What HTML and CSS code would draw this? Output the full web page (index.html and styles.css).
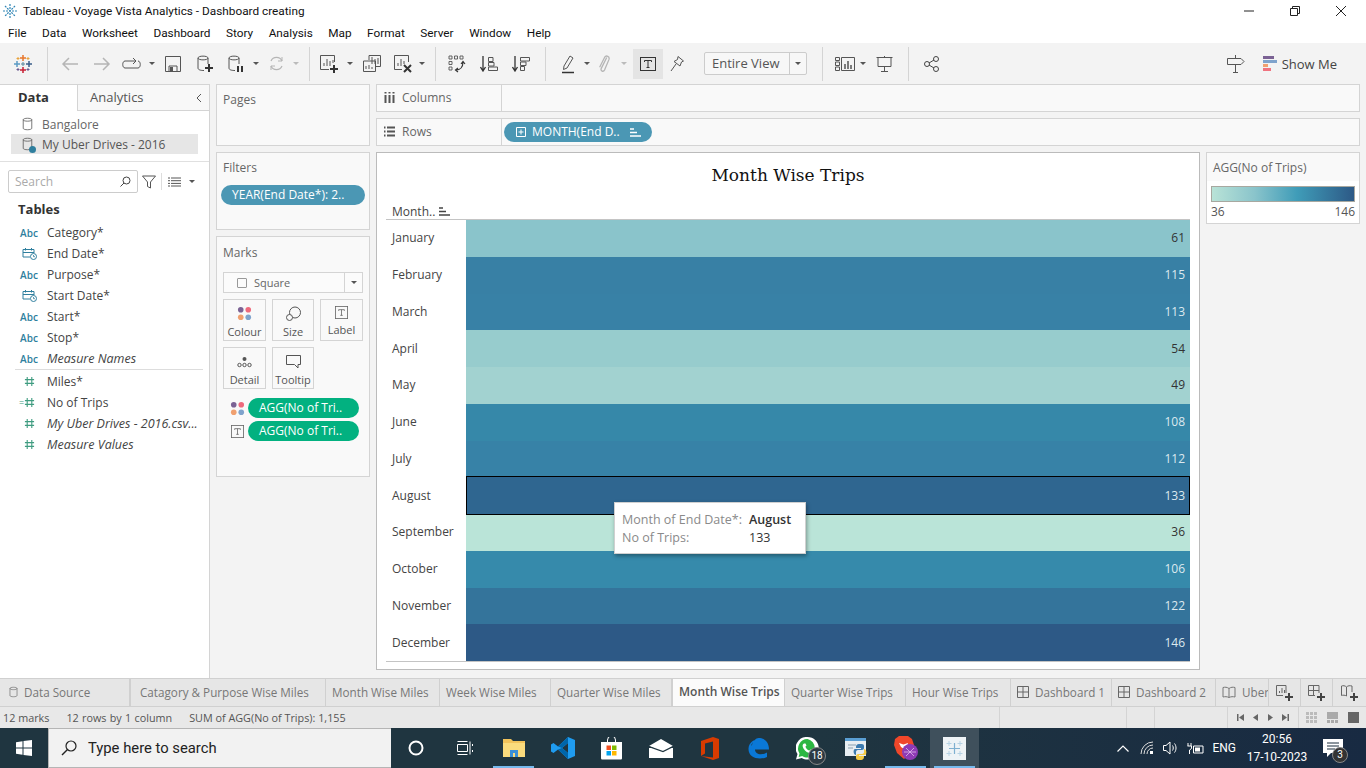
FILE: index.html
```html
<!DOCTYPE html>
<html lang="en">
<head>
  <meta charset="UTF-8" />
  <title>Tableau - Voyage Vista Analytics - Dashboard creating</title>
  <link rel="stylesheet" href="styles.css">
</head>
<body>
  <svg class="defs" width="0" height="0">
    <symbol id="i-db" viewBox="0 0 14 18"><path d="M1.5 3.5C1.5 1 12.5 1 12.5 3.5V14.5C12.5 17 1.5 17 1.5 14.5ZM1.5 3.5C1.5 6 12.5 6 12.5 3.5" fill="none" stroke="currentColor"/></symbol>
    <symbol id="i-t" viewBox="0 0 16 16"><rect x=".5" y=".5" width="15" height="15" fill="none" stroke="currentColor"/><path d="M4.5 6V4.5H11.5V6M8 4.5V11.5M6.5 11.5H9.5" fill="none" stroke="currentColor"/></symbol>
    <symbol id="i-dots" viewBox="0 0 16 16"><circle cx="4" cy="4" r="3" fill="#7b6294"/><circle cx="12" cy="4" r="3" fill="#ee6a7c"/><circle cx="4" cy="12" r="3" fill="#f0a070"/><circle cx="12" cy="12" r="3" fill="#7fa3cc"/></symbol>
    <symbol id="i-sort" viewBox="0 0 11 9"><path d="M0 1H4M0 4.500H7M0 8H11" fill="none" stroke="currentColor" stroke-width="1.500"/></symbol>
    <symbol id="i-hash" viewBox="0 0 12 12"><path d="M3.5 1V11M8.5 1V11M1 4H11M1 8H11" fill="none" stroke="#3f9c80" stroke-width="1.2"/></symbol>
    <symbol id="i-cal" viewBox="0 0 15 13"><path d="M8 10H1V2.5H12V6M1 5.5H12M3.5 1V3.500M9.500 1V3.500" fill="none" stroke="#2f7f9e"/><circle cx="11.500" cy="9.500" r="3" fill="#fff" stroke="#2f7f9e"/><path d="M11.500 8V9.700H13" fill="none" stroke="#2f7f9e" stroke-width=".8"/></symbol>
    <symbol id="i-board" viewBox="0 0 12 12"><path d="M.5.500H11.500V11.500H.5ZM6 .5V11.500M.5 6H11.500" fill="none" stroke="#666"/></symbol>
    <symbol id="i-book" viewBox="0 0 14 12"><path d="M7 2.500C5 1 3 1 1 1.500V11C3 10.500 5 10.500 7 11.500 9 10.500 11 10.500 13 11V1.500C11 1 9 1 7 2.500ZM7 2.500V11.500" fill="none" stroke="#777"/></symbol>
  </svg>

  <div class="app">
    <header class="titlebar">
      <svg class="app-icon" width="14" height="14" viewBox="0 0 14 14"><path d="M7 0V14M0 7H14M2 2L12 12M12 2L2 12" stroke="#2f85b5" stroke-width="1.200" stroke-dasharray="2 1"/></svg>
      <span class="title-text">Tableau - Voyage Vista Analytics - Dashboard creating</span>
      <div class="win-btns">
        <svg width="12" height="12" viewBox="0 0 12 12"><path d="M1 6H11" stroke="#222"/></svg>
        <svg width="12" height="12" viewBox="0 0 12 12"><path d="M1.500 3.500H8.500V10.500H1.500ZM3.500 3.500V1.500H10.500V8.500H8.500" fill="none" stroke="#222"/></svg>
        <svg width="12" height="12" viewBox="0 0 12 12"><path d="M1 1L11 11M11 1L1 11" stroke="#222"/></svg>
      </div>
    </header>

    <nav class="menubar">
      <span>File</span><span>Data</span><span>Worksheet</span><span>Dashboard</span><span>Story</span><span>Analysis</span><span>Map</span><span>Format</span><span>Server</span><span>Window</span><span>Help</span>
    </nav>

    <div class="toolbar">
      <div class="tgroup g0">
        <svg width="18" height="18" viewBox="0 0 18 18"><path d="M9 0V6M6 3H12" stroke="#e8762b" stroke-width="1.500"/><path d="M3 6V12M0 9H6" stroke="#5b9bc4" stroke-width="1.500"/><path d="M15 6V12M12 9H18" stroke="#3b5f8a" stroke-width="1.500"/><path d="M9 12V18M6 15H12" stroke="#c72035" stroke-width="1.500"/><path d="M9 7V11M7 9H11" stroke="#59879b"/><path d="M4 2V5M2.500 3.500H5.500M14 2V5M12.500 3.500H15.500" stroke="#e8a33d"/><path d="M4 13V16M2.500 14.500H5.500M14 13V16M12.500 14.500H15.500" stroke="#6c5a90"/></svg>
      </div>
      <div class="tgroup g1">
        <span class="ti w32 off"><svg width="18" height="14" viewBox="0 0 18 14"><path d="M17 7H2M8 1L2 7L8 13" fill="none" stroke="currentColor" stroke-width="1.500"/></svg></span>
        <span class="ti w32 off"><svg width="18" height="14" viewBox="0 0 18 14"><path d="M1 7H16M10 1L16 7L10 13" fill="none" stroke="currentColor" stroke-width="1.500"/></svg></span>
        <span class="ti w28"><svg width="20" height="12" viewBox="0 0 20 12"><path d="M13 3H3C0 3 0 10 3 10H16C19 10 19 3 16 3" fill="none" stroke="#555"/><path d="M11 0L14 3L11 6" fill="none" stroke="#555"/></svg></span>
        <span class="car w12"></span>
        <span class="ti w30"><svg width="16" height="16" viewBox="0 0 16 16"><path d="M.5.500H15.500V15.500H.5ZM4 15V10H12V15" fill="none" stroke="#555"/><rect x="5" y="11" width="3" height="4" fill="#555"/></svg></span>
        <span class="ti w34"><svg class="stack" width="16" height="18" viewBox="0 0 16 18"><path d="M1 3C1 .5 11 .5 11 3V9M1 3V13C1 15 4 15.500 7 15.500M1 3C1 5.500 11 5.500 11 3" fill="none" stroke="#555"/><path d="M12 9V17M8 13H16" stroke="#333" stroke-width="2"/></svg></span>
        <span class="ti w28"><svg width="16" height="18" viewBox="0 0 16 18"><path d="M1 3C1 .5 11 .5 11 3V9M1 3V13C1 15 4 15.500 7 15.500M1 3C1 5.500 11 5.500 11 3" fill="none" stroke="#555"/><path d="M10 11V17M14 11V17" stroke="#333" stroke-width="2"/></svg></span>
        <span class="car w12"></span>
        <span class="ti w28 off"><svg width="17" height="17" viewBox="0 0 17 17"><path d="M3 6A6 6 0 0 1 14 6M14 11A6 6 0 0 1 3 11" fill="none" stroke="currentColor" stroke-width="1.200"/><path d="M14 2V6H10M3 15V11H7" fill="none" stroke="currentColor"/></svg></span>
        <span class="car w12 off-car"></span>
      </div>
      <div class="tgroup g2">
        <span class="ti w32"><svg width="18" height="18" viewBox="0 0 18 18"><path d="M14.500 7V.5H.5V14.500H9M4 11V8M7 11V4M10 11V6M13 8V5" fill="none" stroke="#555"/><path d="M14 10V18M10 14H18" stroke="#333" stroke-width="2"/></svg></span>
        <span class="car w10"></span>
        <span class="ti w34"><svg width="18" height="17" viewBox="0 0 18 17"><path d="M6 5V.5H17.500V11.500H13M.5 6H12.500V16.500H.5ZM9 2V9M12 4V9M15 3V9M3 14V11M6 14V10M9 14V12" fill="none" stroke="#555"/></svg></span>
        <span class="ti w28"><svg width="18" height="18" viewBox="0 0 18 18"><path d="M14.500 7V.5H.5V14.500H8M4 11V8M7 11V4M10 9V6" fill="none" stroke="#555"/><path d="M10 10L17 17M17 10L10 17" stroke="#333" stroke-width="2"/></svg></span>
        <span class="car w10"></span>
      </div>
      <div class="tgroup g3">
        <span class="ti w32"><svg width="18" height="18" viewBox="0 0 18 18"><path d="M1 1H4V4H1ZM6.500 1H9.500V4H6.500ZM12 1H15V4H12ZM1 6.500H4V9.500H1ZM1 12H4V15H1Z" fill="none" stroke="#555" stroke-width=".9"/><path d="M15 7C15 12 12 15 8 15M13 9L15 6.500L17 9M10 13L7.500 15L10 17" fill="none" stroke="#333" stroke-width="1.200"/></svg></span>
        <span class="ti w32"><svg width="18" height="16" viewBox="0 0 18 16"><path d="M3 0V14M.5 11L3 15L5.500 11" fill="none" stroke="#333" stroke-width="1.300"/><path d="M8.500 1.500H13V5.500H8.500ZM8.500 6.500H14V10H8.500ZM8.500 11H17.500V14.500H8.500Z" fill="none" stroke="#555"/></svg></span>
        <span class="ti w32"><svg width="18" height="16" viewBox="0 0 18 16"><path d="M3 0V14M.5 11L3 15L5.500 11" fill="none" stroke="#333" stroke-width="1.300"/><path d="M8.500 1.500H17.500V5H8.500ZM8.500 6H14V9.500H8.500ZM8.500 10.500H12.500V14.500H8.500Z" fill="none" stroke="#555"/></svg></span>
      </div>
      <div class="tgroup g4">
        <span class="ti w28"><svg width="14" height="20" viewBox="0 0 14 20"><path d="M3 12L9 2L12 4L6 14L2.500 15.500Z" fill="none" stroke="#555"/><path d="M1 18.500H13" stroke="#333" stroke-width="1.500"/></svg></span>
        <span class="car w10"></span>
        <span class="ti w24 off"><svg width="12" height="20" viewBox="0 0 11 18"><path d="M8 3L3 13C2 15.500 5 16.500 6 14.500L10 5C11 2 7.500 .5 6 3L1.500 12" fill="none" stroke="currentColor" stroke-width="1.200"/></svg></span>
        <span class="car w16 off-car"></span>
        <span class="ti w30 on"><svg width="16" height="14" viewBox="0 0 16 14"><rect x=".5" y=".5" width="15" height="13" fill="none" stroke="#333"/><path d="M4.500 5V3.500H11.500V5M8 3.500V10.500M6.500 10.500H9.500" fill="none" stroke="#333"/></svg></span>
        <span class="ti w28"><svg width="14" height="16" viewBox="0 0 14 16"><path d="M8 .5L13.500 5L11.500 6L10 10L4 5.500L7.500 3.500ZM6 8L1 15" fill="none" stroke="#555"/></svg></span>
        <div class="fit-combo"><span class="fit-text">Entire View</span><span class="fit-arrow"><i class="car-i"></i></span></div>
      </div>
      <div class="tgroup g5">
        <span class="ti w26"><svg width="20" height="14" viewBox="0 0 20 14"><path d="M.5.500H4.500V3.500H.5ZM.5 5H4.500V8.500H.5ZM.5 10H4.500V13.500H.5ZM6.500.5H19.500V13.500H6.500Z" fill="none" stroke="#555"/><path d="M10 12V7M13 12V4M16 12V8" stroke="#555" stroke-width="1.500"/></svg></span>
        <span class="car w10"></span>
        <span class="ti w32"><svg width="17" height="16" viewBox="0 0 17 16"><path d="M.5 1.500H16.500M2 1.500V10.500H15V1.500M8.500 0V1.500M8.500 10.500V15M5 15.500H12" fill="none" stroke="#555"/></svg></span>
      </div>
      <div class="tgroup g6">
        <span class="ti w32"><svg width="15" height="16" viewBox="0 0 15 16"><circle cx="3" cy="8" r="2.500" fill="none" stroke="#444"/><circle cx="12" cy="3" r="2.500" fill="none" stroke="#444"/><circle cx="12" cy="13" r="2.500" fill="none" stroke="#444"/><path d="M5 7L10 4M5 9L10 12" stroke="#444"/></svg></span>
      </div>
      <div class="tool-right">
        <svg width="18" height="18" viewBox="0 0 18 18"><path d="M.5 3.500H14L17 6.500L14 9.500H.5ZM8.500 0V3M8.500 10V17M6 17.500H11" fill="none" stroke="#555"/></svg>
        <div class="show-me">
          <svg width="14" height="16" viewBox="0 0 14 16"><rect width="11" height="3" fill="#7b6294"/><rect y="4" width="14" height="3" fill="#7fa3cc"/><rect y="8" width="5" height="3" fill="#f0a070"/><rect y="12" width="8" height="3" fill="#f0737f"/></svg>
          <span>Show Me</span>
        </div>
      </div>
    </div>

    <main class="main">
      <aside class="side">
        <div class="side-tabs">
          <div class="side-tab active">Data</div>
          <div class="side-tab">Analytics<svg class="chev" width="7" height="10" viewBox="0 0 7 10"><path d="M6 1L2 5L6 9" fill="none" stroke="#555"/></svg></div>
        </div>
        <ul class="sources">
          <li class="source"><svg width="11" height="14" class="src-ic"><use href="#i-db"/></svg>Bangalore</li>
          <li class="source current"><svg width="11" height="14" class="src-ic"><use href="#i-db"/></svg><i class="src-dot"></i>My Uber Drives - 2016</li>
        </ul>
        <div class="search-row">
          <div class="search-box"><span>Search</span><svg width="11" height="11" viewBox="0 0 11 11"><circle cx="6.500" cy="4.500" r="3.500" fill="none" stroke="#444"/><path d="M4 7L.5 10.500" stroke="#444"/></svg></div>
          <svg class="funnel" width="14" height="14" viewBox="0 0 14 14"><path d="M.5 1H13.500L8.500 7V13L5.500 11.500V7Z" fill="none" stroke="#555"/></svg>
          <span class="search-sep"></span>
          <svg width="13" height="10" viewBox="0 0 13 10"><path d="M0 1H2M3 1H13M0 3.700H2M3 3.700H13M0 6.400H2M3 6.400H13M0 9H2M3 9H13" stroke="#555"/></svg>
          <i class="car-i side-car"></i>
        </div>
        <h3 class="tables">Tables</h3>
        <ul class="fields">
          <li><span class="fi abc">Abc</span>Category*</li>
          <li><span class="fi"><svg width="15" height="13"><use href="#i-cal"/></svg></span>End Date*</li>
          <li><span class="fi abc">Abc</span>Purpose*</li>
          <li><span class="fi"><svg width="15" height="13"><use href="#i-cal"/></svg></span>Start Date*</li>
          <li><span class="fi abc">Abc</span>Start*</li>
          <li><span class="fi abc">Abc</span>Stop*</li>
          <li class="gen"><span class="fi abc">Abc</span>Measure Names</li>
        </ul>
        <ul class="fields measures">
          <li><span class="fi"><svg width="11" height="11"><use href="#i-hash"/></svg></span>Miles*</li>
          <li><span class="fi calc"><b>=</b><svg width="11" height="11"><use href="#i-hash"/></svg></span>No of Trips</li>
          <li class="gen"><span class="fi"><svg width="11" height="11"><use href="#i-hash"/></svg></span>My Uber Drives - 2016.csv...</li>
          <li class="gen"><span class="fi"><svg width="11" height="11"><use href="#i-hash"/></svg></span>Measure Values</li>
        </ul>
      </aside>

      <section class="cards">
        <div class="card pages"><h4>Pages</h4></div>
        <div class="card filters">
          <h4>Filters</h4>
          <div class="pill blue">YEAR(End Date*): 2..</div>
        </div>
        <div class="card marks">
          <h4>Marks</h4>
          <div class="mark-type">
            <span class="mark-name"><i class="sq"></i>Square</span>
            <span class="mark-arrow"><i class="car-i"></i></span>
          </div>
          <div class="mark-btns">
            <div class="mbtn"><svg width="15" height="15"><use href="#i-dots"/></svg><span>Colour</span></div>
            <div class="mbtn"><svg width="15" height="15" viewBox="0 0 15 15"><circle cx="9" cy="6.500" r="5.500" fill="none" stroke="#555"/><circle cx="3.500" cy="11.500" r="3" fill="#fafafa" stroke="#555"/></svg><span>Size</span></div>
            <div class="mbtn"><svg class="t-ic" width="13" height="13"><use href="#i-t"/></svg><span>Label</span></div>
            <div class="mbtn"><svg width="15" height="15" viewBox="0 0 15 15"><circle cx="7.500" cy="5" r="2" fill="#555"/><circle cx="2.500" cy="11" r="1.700" fill="none" stroke="#555"/><circle cx="7.500" cy="11" r="1.700" fill="none" stroke="#555"/><circle cx="12.500" cy="11" r="1.700" fill="none" stroke="#555"/></svg><span>Detail</span></div>
            <div class="mbtn"><svg width="15" height="15" viewBox="0 0 15 15"><path d="M.5 1.500H14.500V10.500H12V14L8.500 10.500H.5Z" fill="none" stroke="#555"/></svg><span>Tooltip</span></div>
          </div>
          <div class="enc"><svg width="15" height="15"><use href="#i-dots"/></svg><div class="pill green">AGG(No of Tri..</div></div>
          <div class="enc"><svg class="t-ic" width="13" height="13"><use href="#i-t"/></svg><div class="pill green">AGG(No of Tri..</div></div>
        </div>
      </section>

      <section class="work">
        <div class="shelf">
          <div class="shelf-label"><svg width="11" height="11" viewBox="0 0 11 11"><path d="M1.500 3V11M5.500 3V11M9.500 3V11M1.500 0V1.500M5.500 0V1.500M9.500 0V1.500" stroke="#555" stroke-width="2"/></svg>Columns</div>
        </div>
        <div class="shelf">
          <div class="shelf-label"><svg width="11" height="11" viewBox="0 0 11 11"><path d="M0 1.500H1.500M3 1.500H11M0 5.500H1.500M3 5.500H11M0 9.500H1.500M3 9.500H11" stroke="#555" stroke-width="2"/></svg>Rows</div>
          <div class="shelf-body">
            <div class="pill blue row-pill">
              <svg width="10" height="10" viewBox="0 0 10 10"><path d="M.5.500H9.500V9.500H.5ZM5 2.500V7.500M2.500 5H7.500" fill="none" stroke="#fff"/></svg>
              <span>MONTH(End D..</span>
              <svg class="pill-sort" width="11" height="9"><use href="#i-sort"/></svg>
            </div>
          </div>
        </div>
        <div class="canvas">
          <div class="view">
            <h2 class="view-title">Month Wise Trips</h2>
            <div class="view-head"><span>Month..</span><svg width="11" height="9"><use href="#i-sort"/></svg></div>
            <div class="chart">
              <div class="row"><span class="month">January</span><div class="bar c61">61</div></div>
              <div class="row"><span class="month">February</span><div class="bar c115">115</div></div>
              <div class="row"><span class="month">March</span><div class="bar c113">113</div></div>
              <div class="row"><span class="month">April</span><div class="bar c54">54</div></div>
              <div class="row"><span class="month">May</span><div class="bar c49">49</div></div>
              <div class="row"><span class="month">June</span><div class="bar c108">108</div></div>
              <div class="row"><span class="month">July</span><div class="bar c112">112</div></div>
              <div class="row"><span class="month">August</span><div class="bar c133 selected">133</div></div>
              <div class="row"><span class="month">September</span><div class="bar c36">36</div></div>
              <div class="row"><span class="month">October</span><div class="bar c106">106</div></div>
              <div class="row"><span class="month">November</span><div class="bar c122">122</div></div>
              <div class="row"><span class="month">December</span><div class="bar c146">146</div></div>
            </div>
            <div class="tooltip">
              <span class="tk">Month of End Date*:</span><span class="tv strong">August</span>
              <span class="tk">No of Trips:</span><span class="tv">133</span>
            </div>
          </div>
          <div class="legend">
            <div class="legend-title">AGG(No of Trips)</div>
            <div class="legend-body">
              <div class="ramp"></div>
              <div class="ramp-labels"><span>36</span><span>146</span></div>
            </div>
          </div>
        </div>
      </section>
    </main>

    <div class="tabs">
      <div class="tab ds"><svg width="9" height="12" class="tab-ic"><use href="#i-db"/></svg>Data Source</div>
      <div class="tab first">Catagory &amp; Purpose Wise Miles</div>
      <div class="tab">Month Wise Miles</div>
      <div class="tab">Week Wise Miles</div>
      <div class="tab">Quarter Wise Miles</div>
      <div class="tab active">Month Wise Trips</div>
      <div class="tab">Quarter Wise Trips</div>
      <div class="tab">Hour Wise Trips</div>
      <div class="tab"><svg width="12" height="12" class="tab-ic"><use href="#i-board"/></svg>Dashboard 1</div>
      <div class="tab"><svg width="12" height="12" class="tab-ic"><use href="#i-board"/></svg>Dashboard 2</div>
      <div class="tab"><svg width="14" height="12" class="tab-ic"><use href="#i-book"/></svg>Uber</div>
      <div class="tab add"><svg width="20" height="18" viewBox="0 0 20 18"><path d="M11 9V1.500H1.500V11.500H8M4.500 9V7M7 9V4M9.500 9V6" fill="none" stroke="#666"/><path d="M14 9V17M10 13H18" stroke="#444" stroke-width="2"/></svg></div>
      <div class="tab add"><svg width="20" height="18" viewBox="0 0 20 18"><path d="M12 9V1.500H1.500V11.500H8M6.500 1.500V11.500M1.500 6.500H12" fill="none" stroke="#666"/><path d="M14 9V17M10 13H18" stroke="#444" stroke-width="2"/></svg></div>
      <div class="tab add"><svg width="20" height="18" viewBox="0 0 20 18"><path d="M6.500 3C5 1.500 3 1.500 1.500 2V11.500C3 11 5 11 6.500 12M6.500 3C8 1.500 10 1.500 12 2V8M6.500 3V12" fill="none" stroke="#666"/><path d="M14 9V17M10 13H18" stroke="#444" stroke-width="2"/></svg></div>
    </div>

    <div class="status">
      <div class="st-text"><span>12 marks</span><span class="st-rows">12 rows by 1 column</span><span>SUM of AGG(No of Trips): 1,155</span></div>
      <div class="st-cell"></div><div class="st-cell"></div><div class="st-cell"></div>
      <div class="st-nav">
        <svg width="7" height="7" viewBox="0 0 7 7"><path d="M0 0H1.500V7H0ZM7 0V7L2 3.500Z" fill="#666"/></svg>
        <svg width="5" height="7" viewBox="0 0 5 7"><path d="M5 0V7L0 3.500Z" fill="#666"/></svg>
        <svg width="5" height="7" viewBox="0 0 5 7"><path d="M0 0V7L5 3.500Z" fill="#666"/></svg>
        <svg width="7" height="7" viewBox="0 0 7 7"><path d="M0 0V7L5 3.500ZM5.500 0H7V7H5.500Z" fill="#666"/></svg>
      </div>
      <div class="st-views">
        <svg width="11" height="11" viewBox="0 0 11 11"><path d="M0 0H3V3H0ZM4 0H7V3H4ZM8 0H11V3H8ZM0 4H3V7H0ZM4 4H7V7H4ZM8 4H11V7H8ZM0 8H3V11H0ZM4 8H7V11H4ZM8 8H11V11H8Z" fill="#bbb"/></svg>
        <svg width="11" height="11" viewBox="0 0 11 11"><path d="M0 0H11V7H0ZM0 8H3V11H0ZM4 8H7V11H4ZM8 8H11V11H8Z" fill="#aaa"/></svg>
        <svg width="11" height="11" viewBox="0 0 11 11"><rect width="11" height="11" fill="#666"/></svg>
      </div>
    </div>

    <footer class="taskbar">
      <div class="start"><svg width="16" height="16" viewBox="0 0 16 16"><path d="M0 2.300L6.500 1.300V7.500H0ZM7.500 1.100L16 0V7.500H7.500ZM0 8.500H6.500V14.700L0 13.700ZM7.500 8.500H16V16L7.500 14.900Z" fill="#fff"/></svg></div>
      <div class="task-search">
        <svg width="16" height="16" viewBox="0 0 16 16"><circle cx="10" cy="6" r="5" fill="none" stroke="#222" stroke-width="1.200"/><path d="M6.500 9.500L1 15" stroke="#222" stroke-width="1.500"/></svg>
        <span>Type here to search</span>
      </div>
      <div class="task-apps">
        <div class="app-slot"><svg width="16" height="16" viewBox="0 0 16 16"><circle cx="8" cy="8" r="6.500" fill="none" stroke="#fff" stroke-width="2"/></svg></div>
        <div class="app-slot"><svg width="16" height="14" viewBox="0 0 16 14"><path d="M.5 3.500H10.500V10.500H.5ZM.5.500H10.500M.5 13.500H10.500M13 .5V13.500M15.500 3V5M15.500 9V11" fill="none" stroke="#fff"/></svg></div>
        <div class="app-slot running"><svg width="22" height="20" viewBox="0 0 22 20"><path d="M0 1H8L10 3H22V19H0Z" fill="#f2c35b"/><path d="M0 5H22V19H0Z" fill="#fadb7d"/><path d="M7 12H15V19H12V15H10V19H7Z" fill="#3a8fd8"/></svg></div>
        <div class="app-slot"><svg width="24" height="24" viewBox="0 0 24 24"><path d="M17 1L24 4V20L17 23L7 13.500L2.500 17L0 15.500V8.500L2.500 7L7 10.500ZM17 7L11 12L17 17Z" fill="#1f9cf0"/><path d="M17 1V7L11 12L7 10.500ZM17 23V17L11 12L7 13.500Z" fill="#0065a9"/></svg></div>
        <div class="app-slot"><svg width="23" height="23" viewBox="0 0 23 23"><path d="M7.500 6V3A4 4 0 0 1 15.500 3V6" fill="none" stroke="#fff"/><path d="M1 5H22V21C22 22 21.500 22.500 20.500 22.500H2.500C1.500 22.500 1 22 1 21Z" fill="#fff"/><rect x="6.500" y="8.500" width="4.500" height="4.500" fill="#f25022"/><rect x="12" y="8.500" width="4.500" height="4.500" fill="#7fba00"/><rect x="6.500" y="14" width="4.500" height="4.500" fill="#00a4ef"/><rect x="12" y="14" width="4.500" height="4.500" fill="#ffb900"/></svg></div>
        <div class="app-slot"><svg width="24" height="19" viewBox="0 0 24 19"><path d="M0 7L12 0L24 7L14 13ZM0 9L24 9V19H0Z" fill="#fff"/><path d="M0 7.500L14 12.500L24 7.500" fill="none" stroke="#1f3540" stroke-width="1.200"/></svg></div>
        <div class="app-slot"><svg width="18" height="23" viewBox="0 0 18 23"><path d="M0 4L12 0L18 2V21L12 23L0 19L12 20.500V4.500L4 6.500V16.500L0 19Z" fill="#d83b01"/></svg></div>
        <div class="app-slot"><svg width="21" height="21" viewBox="0 0 21 21"><path d="M10.500 0C16.500 0 21 4 21 11.500H7C7 16 13 18 19 14.500V19C12 22.500 0 20.500 .5 10.500 1 5 5 2 8 2 5 3.500 3.500 6 3 8 6 4.500 9 4.500 10.500 4.500 14 4.500 15 7 15 8H7C7 6 5 6 4 7 5 3 8 0 10.500 0Z" fill="#0a78d7"/></svg></div>
        <div class="app-slot wa">
          <svg width="23" height="23" viewBox="0 0 23 23"><path d="M11.500 0A11 11 0 0 1 11.500 22.500C9.500 22.500 7.500 22 5.800 21L0 22.500L1.500 17A11 11 0 0 1 11.500 0Z" fill="#fff"/><path d="M11.500 2A9.500 9.500 0 0 1 11.500 20.500C9.500 20.500 8 20 6.200 19L2.700 20L3.500 16.500A9.500 9.500 0 0 1 11.500 2Z" fill="#2cb742"/><path d="M8 6.500C6.500 7 6 9 7.500 11.500 9.500 15 13 16.500 15 16 16.500 15.500 17 14 16.500 13.500L14.500 12.500L13.500 13.500C12 13.500 9.500 11 9.500 9.500L10.500 8.500L9.500 6.500Z" fill="#fff"/></svg>
          <span class="wa-badge">18</span>
        </div>
        <div class="app-slot"><svg width="23" height="23" viewBox="0 0 23 23"><rect y="1" width="21" height="18" fill="#e8eef2"/><rect y="1" width="21" height="3" fill="#5a9fd4"/><path d="M3 8H11M3 11H8" stroke="#8aa0b0"/><path d="M15 7C11 7 11 9 11 11H16V12H10C8 12 8 18 11 18V15C11 13.500 12 13 14 13H17C18 13 19 12 19 11V9C19 7 17 7 15 7Z" fill="#3d7cb0"/><path d="M15 23C19 23 19 21 19 19H14V18H20C22 18 22 12 19 12V15C19 16.500 18 17 16 17H13C12 17 11 18 11 19V21C11 23 13 23 15 23Z" fill="#f6cb45"/></svg></div>
        <div class="app-slot running"><svg width="26" height="25" viewBox="0 0 26 25"><path d="M6 0H15L19 3L21 9L18 17L11 23L4 17L1 9L2 3Z" fill="#f0472a"/><path d="M6 7L10.500 8.500L15 7L14 11L11 13L8 11ZM9 16H13L11 18Z" fill="#fff"/><circle cx="17" cy="16" r="8" fill="#8e3bb5"/><path d="M11 16H23M13 12L21 20M21 12L13 20" stroke="#e0b8ec" stroke-width=".8"/></svg></div>
        <div class="app-slot running current">
          <svg class="tb-logo" width="23" height="23" viewBox="0 0 23 23"><rect width="23" height="23" fill="#eef3f6"/><path d="M11.500 6V17M6 11.500H17" stroke="#7fb0d0" stroke-width="1.200"/><path d="M6 4V9M3.500 6.500H8.500M17 4V9M14.500 6.500H19.500M6 14V19M3.500 16.500H8.500M17 14V19M14.500 16.500H19.500" stroke="#b5d2e4"/></svg>
        </div>
      </div>
      <div class="tray">
        <svg class="tray-ic up" width="12" height="7" viewBox="0 0 12 7"><path d="M.5 6.500L6 1L11.500 6.500" fill="none" stroke="#fff" stroke-width="1.200"/></svg>
        <svg class="tray-ic" width="15" height="14" viewBox="0 0 15 14"><path d="M1 13A12 12 0 0 1 13 1M4 13A9 9 0 0 1 13 4M7 13A6 6 0 0 1 13 7" fill="none" stroke="#ddd"/><rect x="10" y="10" width="3" height="3" fill="#fff"/></svg>
        <svg class="tray-ic" width="16" height="14" viewBox="0 0 16 14"><path d="M.5 4.500H3L7 1V13L3 9.500H.5Z" fill="none" stroke="#fff"/><path d="M9.500 4.500C10.500 6 10.500 8 9.500 9.500M11.500 2.500C13.500 5 13.500 9 11.500 11.500" fill="none" stroke="#fff"/></svg>
        <svg class="tray-ic" width="17" height="11" viewBox="0 0 17 11"><path d="M6.500 3H16V10H6.500ZM1 0V3M4 0V3M.5 3H4.500V5.500L2.500 7V11" fill="none" stroke="#fff"/><rect x="8" y="4.500" width="5" height="4" fill="#fff"/></svg>
        <span class="lang">ENG</span>
        <div class="clock"><span>20:56</span><span>17-10-2023</span></div>
        <div class="notif">
          <svg width="20" height="18" viewBox="0 0 20 18"><path d="M0 0H20V14H8L4 18V14H0Z" fill="#fff"/><path d="M4 4H16M4 7H16M4 10H12" stroke="#1a2c3d"/></svg>
          <span class="notif-badge">3</span>
        </div>
      </div>
    </footer>
  </div>
</body>
</html>
```

FILE: styles.css
```css
* {
  box-sizing: border-box;
}
html, body {
  margin: 0;
  padding: 0;
  height: 100%;
  overflow: hidden;
}
body {
  font-family: 'Open Sans', 'Noto Sans', sans-serif;
  font-size: 12px;
  color: #444;
  background: #f3f3f3;
}
ul {
  list-style: none;
  margin: 0;
  padding: 0;
}
h2, h3, h4 {
  margin: 0;
}
.defs {
  position: absolute;
}
.app {
  width: 1366px;
  height: 768px;
  display: flex;
  flex-direction: column;
}

/* window title + menu */
.titlebar {
  height: 22px;
  background: #fff;
  display: flex;
  align-items: center;
  padding-left: 3px;
  color: #111;
}
.title-text {
  margin-left: 6px;
  font-family: 'Roboto', sans-serif;
  font-size: 11.800px;
}
.win-btns {
  margin-left: auto;
  display: flex;
  gap: 34px;
  padding-right: 19px;
}
.menubar {
  height: 21px;
  background: #fff;
  display: flex;
  align-items: center;
  gap: 15.500px;
  padding-left: 8px;
  font-family: 'Roboto', sans-serif;
  font-size: 11.800px;
  color: #111;
}

/* toolbar */
.toolbar {
  height: 41px;
  display: flex;
  align-items: center;
}
.tgroup {
  display: flex;
  align-items: center;
  height: 34px;
  border-right: 1px solid #d4d4d4;
}
.g0 { width: 48px; justify-content: center; padding-right: 2px; }
.g1 { padding: 0 7px 0 6px; }
.g2 { padding: 0 8px 0 3px; }
.g3 { padding: 0 8px 0 5px; }
.g4 { padding: 0 15px 0 8px; }
.g5 { padding: 0 8px 0 9px; }
.g6 { padding: 0 0 0 6px; border-right: none; }
.ti {
  display: flex;
  align-items: center;
  justify-content: center;
  height: 30px;
  color: #555;
}
.ti.off { color: #b5b5b5; }
.ti.on {
  background: #e4e4e4;
  margin-left: 1px;
}
.w24 { width: 24px; }
.w26 { width: 26px; }
.w28 { width: 28px; }
.w30 { width: 30px; }
.w32 { width: 32px; }
.w34 { width: 34px; }
.car {
  height: 30px;
  display: flex;
  align-items: center;
  justify-content: center;
}
.w10 { width: 10px; }
.w12 { width: 12px; }
.w16 { width: 16px; }
.car::after, .car-i {
  content: "";
  display: block;
  width: 0;
  height: 0;
  border-left: 3px solid transparent;
  border-right: 3px solid transparent;
  border-top: 3px solid #555;
}
.off-car::after {
  border-top-color: #bbb;
}
.fit-combo {
  margin-left: 13px;
  width: 103px;
  height: 23px;
  display: flex;
  background: #f7f7f7;
  border: 1px solid #ccc;
  border-radius: 2px;
  font-size: 13px;
  color: #555;
}
.fit-text {
  width: 85px;
  padding-left: 7px;
  line-height: 20px;
  border-right: 1px solid #ccc;
}
.fit-arrow {
  flex: 1;
  display: flex;
  align-items: center;
  justify-content: center;
}
.tool-right {
  margin-left: auto;
  display: flex;
  align-items: center;
  gap: 18px;
  padding-right: 29px;
}
.show-me {
  display: flex;
  align-items: center;
  gap: 5px;
  font-size: 13px;
  color: #444;
}

/* main area */
.main {
  flex: 1;
  min-height: 0;
  display: flex;
}
.side {
  width: 210px;
  background: #fff;
  border-right: 1px solid #d4d4d4;
}
.side-tabs {
  display: flex;
  height: 27px;
}
.side-tab {
  line-height: 24px;
  font-size: 13px;
  padding-left: 18px;
  width: 77px;
  font-weight: 700;
  color: #333;
  border-top: 1px solid #d4d4d4;
}
.side-tab + .side-tab {
  flex: 1;
  padding-left: 12px;
  font-weight: 400;
  color: #555;
  background: #f8f8f8;
  border-left: 1px solid #d4d4d4;
  border-bottom: 1px solid #d4d4d4;
  position: relative;
}
.chev {
  position: absolute;
  right: 7px;
  top: 8px;
}
.sources {
  padding: 3px 11px 6px;
  border-bottom: 1px solid #e0e0e0;
  height: 51px;
}
.source {
  height: 20px;
  display: flex;
  align-items: center;
  padding-left: 12px;
  color: #666;
  position: relative;
}
.source.current {
  background: #e6e6e6;
  color: #555;
}
.src-ic {
  margin-right: 9px;
  margin-left: -1px;
  color: #555;
}
.src-dot {
  position: absolute;
  left: 18px;
  top: 12px;
  width: 7px;
  height: 7px;
  border-radius: 50%;
  background: #2f7f9e;
}
.search-row {
  display: flex;
  align-items: center;
  padding: 8px 0 0 8px;
}
.search-box {
  width: 130px;
  height: 23px;
  display: flex;
  align-items: center;
  justify-content: space-between;
  padding: 0 6px;
  border: 1px solid #ccc;
  border-radius: 2px;
  color: #aaa;
}
.funnel {
  margin: 0 5px 0 4px;
}
.search-sep {
  width: 1px;
  height: 17px;
  background: #ddd;
  margin-right: 6px;
}
.side-car {
  margin-left: 8px;
}
.tables {
  font-size: 13px;
  font-weight: 700;
  color: #333;
  padding: 7px 0 0 18px;
  height: 29px;
}
.fields {
  padding-left: 15px;
}
.fields li {
  height: 21px;
  display: flex;
  align-items: center;
  color: #444;
}
.fields .gen {
  font-style: italic;
  font-size: 12.500px;
  white-space: nowrap;
}
.fi {
  width: 32px;
  display: flex;
  justify-content: center;
  padding-right: 4px;
  flex-shrink: 0;
}
.abc {
  font-size: 10px;
  font-style: normal;
  font-weight: 600;
  color: #2f7f9e;
}
.calc {
  color: #3f9c80;
  align-items: center;
  margin-left: -4px;
  width: 36px;
  line-height: 11px;
}
.calc b {
  font-size: 9px;
  font-weight: 400;
}
.measures {
  margin: 0 6px 0 15px;
  padding: 1px 0 0;
  border-top: 1px solid #ddd;
}

/* pages / filters / marks */
.cards {
  width: 154px;
  margin-left: 6px;
  display: flex;
  flex-direction: column;
  gap: 6px;
}
.card {
  background: #f9f9f9;
  border: 1px solid #d4d4d4;
}
.card h4 {
  font-weight: 400;
  color: #666;
  font-size: 12px;
  padding: 6px 0 0 6px;
  height: 25px;
}
.pages { height: 62px; }
.filters { height: 78px; }
.marks { height: 241px; }
.filters .pill {
  margin: 7px 4px 0;
}
.pill {
  height: 20px;
  border-radius: 10px;
  color: #fff;
  line-height: 20px;
  white-space: nowrap;
  padding-left: 11px;
}
.pill.blue { background: #4b97b4; }
.pill.green { background: #02b180; flex: 1; }
.marks h4 {
  height: 35px;
  padding-top: 7px;
}
.mark-type {
  margin: 0 6px;
  height: 21px;
  display: flex;
  border: 1px solid #d4d4d4;
  background: #fbfbfb;
  color: #666;
}
.mark-name {
  flex: 1;
  display: flex;
  align-items: center;
  padding-left: 13px;
  font-size: 11px;
}
.sq {
  width: 10px;
  height: 10px;
  border: 1px solid #999;
  border-radius: 1px;
  margin-right: 7px;
}
.mark-arrow {
  width: 18px;
  display: flex;
  align-items: center;
  justify-content: center;
  border-left: 1px solid #d4d4d4;
}
.mark-btns {
  margin: 6px 6px 0;
  display: grid;
  grid-template-columns: 43px 42px 43px;
  grid-auto-rows: 42px;
  gap: 6px;
}
.mbtn {
  border: 1px solid #d4d4d4;
  display: flex;
  flex-direction: column;
  align-items: center;
  padding-top: 6px;
  gap: 4px;
  color: #555;
  font-size: 11px;
  line-height: 14px;
}
.t-ic {
  color: #666;
}
.enc {
  display: flex;
  align-items: center;
  margin: 3px 10px 0 13px;
  gap: 3px;
}
.mark-btns + .enc { margin-top: 9px; }
.enc .t-ic { margin: 0 1px; }

/* shelves + view */
.work {
  flex: 1;
  min-width: 0;
  margin-left: 6px;
  padding-right: 6px;
  display: flex;
  flex-direction: column;
}
.shelf {
  height: 28px;
  display: flex;
  background: #f9f9f9;
  border: 1px solid #d4d4d4;
  margin-bottom: 6px;
}
.shelf-label {
  width: 125px;
  display: flex;
  align-items: center;
  gap: 7px;
  padding: 0 0 2px 7px;
  border-right: 1px solid #d4d4d4;
  color: #666;
}
.shelf-label svg {
  margin-top: 1px;
}
.shelf-body {
  flex: 1;
  display: flex;
  align-items: center;
  padding-left: 2px;
}
.row-pill {
  width: 148px;
  display: flex;
  align-items: center;
  padding-left: 12px;
}
.row-pill span {
  margin-left: 6px;
}
.pill-sort {
  margin-left: 10px;
  color: #fff;
}
.canvas {
  flex: 1;
  min-height: 0;
  display: flex;
  gap: 6px;
  padding-bottom: 8px;
}
.view {
  width: 824px;
  background: #fff;
  border: 1px solid #bbb;
  position: relative;
}
.view-title {
  font-family: 'DejaVu Serif', serif;
  font-size: 17px;
  font-weight: 400;
  text-align: center;
  color: #111;
  height: 50px;
  padding-top: 12px;
}
.view-head {
  height: 17px;
  margin: 0 9px 0 9px;
  padding-left: 6px;
  border-bottom: 1px solid #c4c4c4;
  display: flex;
  align-items: center;
  gap: 4px;
  color: #444;
}
.chart {
  margin: 0 9px 0 9px;
  height: 442px;
  display: grid;
  grid-template-rows: repeat(12, 1fr);
  border-bottom: 1px solid #c4c4c4;
}
.row {
  display: flex;
  min-height: 0;
}
.month {
  width: 80px;
  padding: 0 0 1px 6px;
  display: flex;
  align-items: center;
  color: #444;
}
.bar {
  flex: 1;
  display: flex;
  align-items: center;
  justify-content: flex-end;
  padding: 0 5px 1px 0;
  color: #dce9ef;
}
.selected {
  outline: 1px solid #000;
  outline-offset: -1px;
  margin: -1px 0;
  position: relative;
}
.c61 { background: #8ac4cb; color: #333; }
.c115 { background: #3880a5; }
.c113 { background: #3881a6; }
.c54 { background: #97cccd; color: #333; }
.c49 { background: #a2d2d0; color: #333; }
.c108 { background: #3688a9; }
.c112 { background: #3782a7; }
.c133 { background: #2f6690; }
.c36 { background: #bae4d8; color: #333; }
.c106 { background: #368aab; }
.c122 { background: #34749b; }
.c146 { background: #2d5986; }
.tooltip {
  position: absolute;
  left: 237px;
  top: 349px;
  width: 192px;
  height: 52px;
  padding: 8px 0 0 7px;
  background: #fff;
  border: 1px solid #d0d0d0;
  box-shadow: 1px 2px 4px rgba(0, 0, 0, 0.35);
  display: grid;
  grid-template-columns: 127px 1fr;
  grid-auto-rows: 18px;
  font-size: 12.500px;
}
.tk { color: #8a8a8a; white-space: nowrap; }
.tv { color: #333; }
.strong { font-weight: 600; }
.legend {
  width: 154px;
  height: 72px;
  border: 1px solid #d4d4d4;
  background: #fff;
}
.legend-title {
  height: 28px;
  background: #f9f9f9;
  padding: 6px 0 0 6px;
  color: #666;
}
.legend-body {
  padding: 5px 4px 0;
}
.ramp {
  height: 16px;
  border: 1px solid #a8a8a0;
  background: linear-gradient(to right, #b9e3d7, #8ac4cb 30%, #3f9cb8 60%, #2d5986);
}
.ramp-labels {
  display: flex;
  justify-content: space-between;
  line-height: 20px;
  color: #555;
}

/* sheet tabs */
.tabs {
  height: 29px;
  display: grid;
  grid-template-columns: 131px 195px 114px 111px 121px 113px 121px 105px 101px 104px 53px 32px 32px 33px;
  background: #e6e6e6;
  border-top: 1px solid #d0d0d0;
  border-bottom: 1px solid #d0d0d0;
  font-size: 11.700px;
}
.tab {
  display: flex;
  align-items: center;
  gap: 6px;
  padding: 0 0 2px 6px;
  border-right: 1px solid #d0d0d0;
  color: #777;
  white-space: nowrap;
  overflow: hidden;
}
.tab.ds {
  padding-left: 9px;
  border-right: 2px solid #d0d0d0;
}
.tab.first {
  padding-left: 9px;
}
.tab-ic {
  color: #666;
  flex-shrink: 0;
}
.tab.active {
  background: #fbfbfb;
  font-size: 12px;
  font-weight: 600;
  color: #555;
  border-left: 1px solid #d0d0d0;
}
.tab.add {
  justify-content: center;
  padding: 0;
}
.tab.add:last-child {
  border-right: none;
}

/* status bar */
.status {
  height: 21px;
  display: grid;
  grid-template-columns: 999px 127px 28px 26px 47px 71px 1fr;
  background: #e8e8e8;
  color: #555;
  font-size: 10.800px;
}
.st-text {
  display: flex;
  align-items: center;
  gap: 17px;
  padding-left: 3px;
  white-space: nowrap;
}
.st-rows {
  word-spacing: .5px;
}
.st-cell {
  border-left: 1px solid #d4d4d4;
}
.st-nav {
  grid-column: 6;
  display: flex;
  align-items: center;
  justify-content: space-around;
  padding: 0 4px;
  border-left: 1px solid #d4d4d4;
}
.st-views {
  display: flex;
  align-items: center;
  justify-content: space-around;
  padding: 0 2px;
  border-left: 1px solid #d4d4d4;
}

/* windows taskbar */
.taskbar {
  height: 40px;
  display: flex;
  color: #fff;
  font-family: 'Roboto', sans-serif;
  background: linear-gradient(to right, #1f3540, #1f3540 60%, #182a42);
}
.start {
  width: 48px;
  display: flex;
  align-items: center;
  justify-content: center;
}
.task-search {
  width: 343px;
  background: #f2f2f2;
  border: 1px solid #b5b5b5;
  border-width: 1px 0 1px 1px;
  display: flex;
  align-items: center;
  gap: 11px;
  padding-left: 12px;
  font-size: 14.800px;
  color: #222;
}
.task-apps {
  display: flex;
}
.app-slot {
  width: 49px;
  display: flex;
  align-items: center;
  justify-content: center;
  position: relative;
}
.running::after {
  content: "";
  position: absolute;
  left: 4px;
  right: 4px;
  bottom: 0;
  height: 2px;
  background: #76b9ed;
}
.current {
  background: #3f505c;
}
.wa-badge {
  position: absolute;
  left: 25px;
  top: 19px;
  width: 18px;
  height: 18px;
  border-radius: 50%;
  background: #2c3a44;
  border: 1px solid #888;
  font-size: 10px;
  line-height: 16px;
  text-align: center;
}
.tray {
  margin-left: auto;
  display: flex;
  align-items: center;
  font-size: 12px;
  padding-right: 8px;
}
.tray-ic {
  margin-right: 8px;
}
.tray-ic.up {
  margin-right: 11px;
}
.lang {
  margin-right: 10px;
}
.clock {
  width: 62px;
  display: flex;
  flex-direction: column;
  align-items: center;
  line-height: 18px;
  white-space: nowrap;
}
.notif {
  width: 50px;
  height: 40px;
  display: flex;
  align-items: center;
  justify-content: center;
  position: relative;
}
.notif-badge {
  position: absolute;
  left: 24px;
  top: 19px;
  width: 16px;
  height: 16px;
  border-radius: 50%;
  background: #333;
  border: 1px solid #888;
  font-size: 10px;
  line-height: 14px;
  text-align: center;
}
```
